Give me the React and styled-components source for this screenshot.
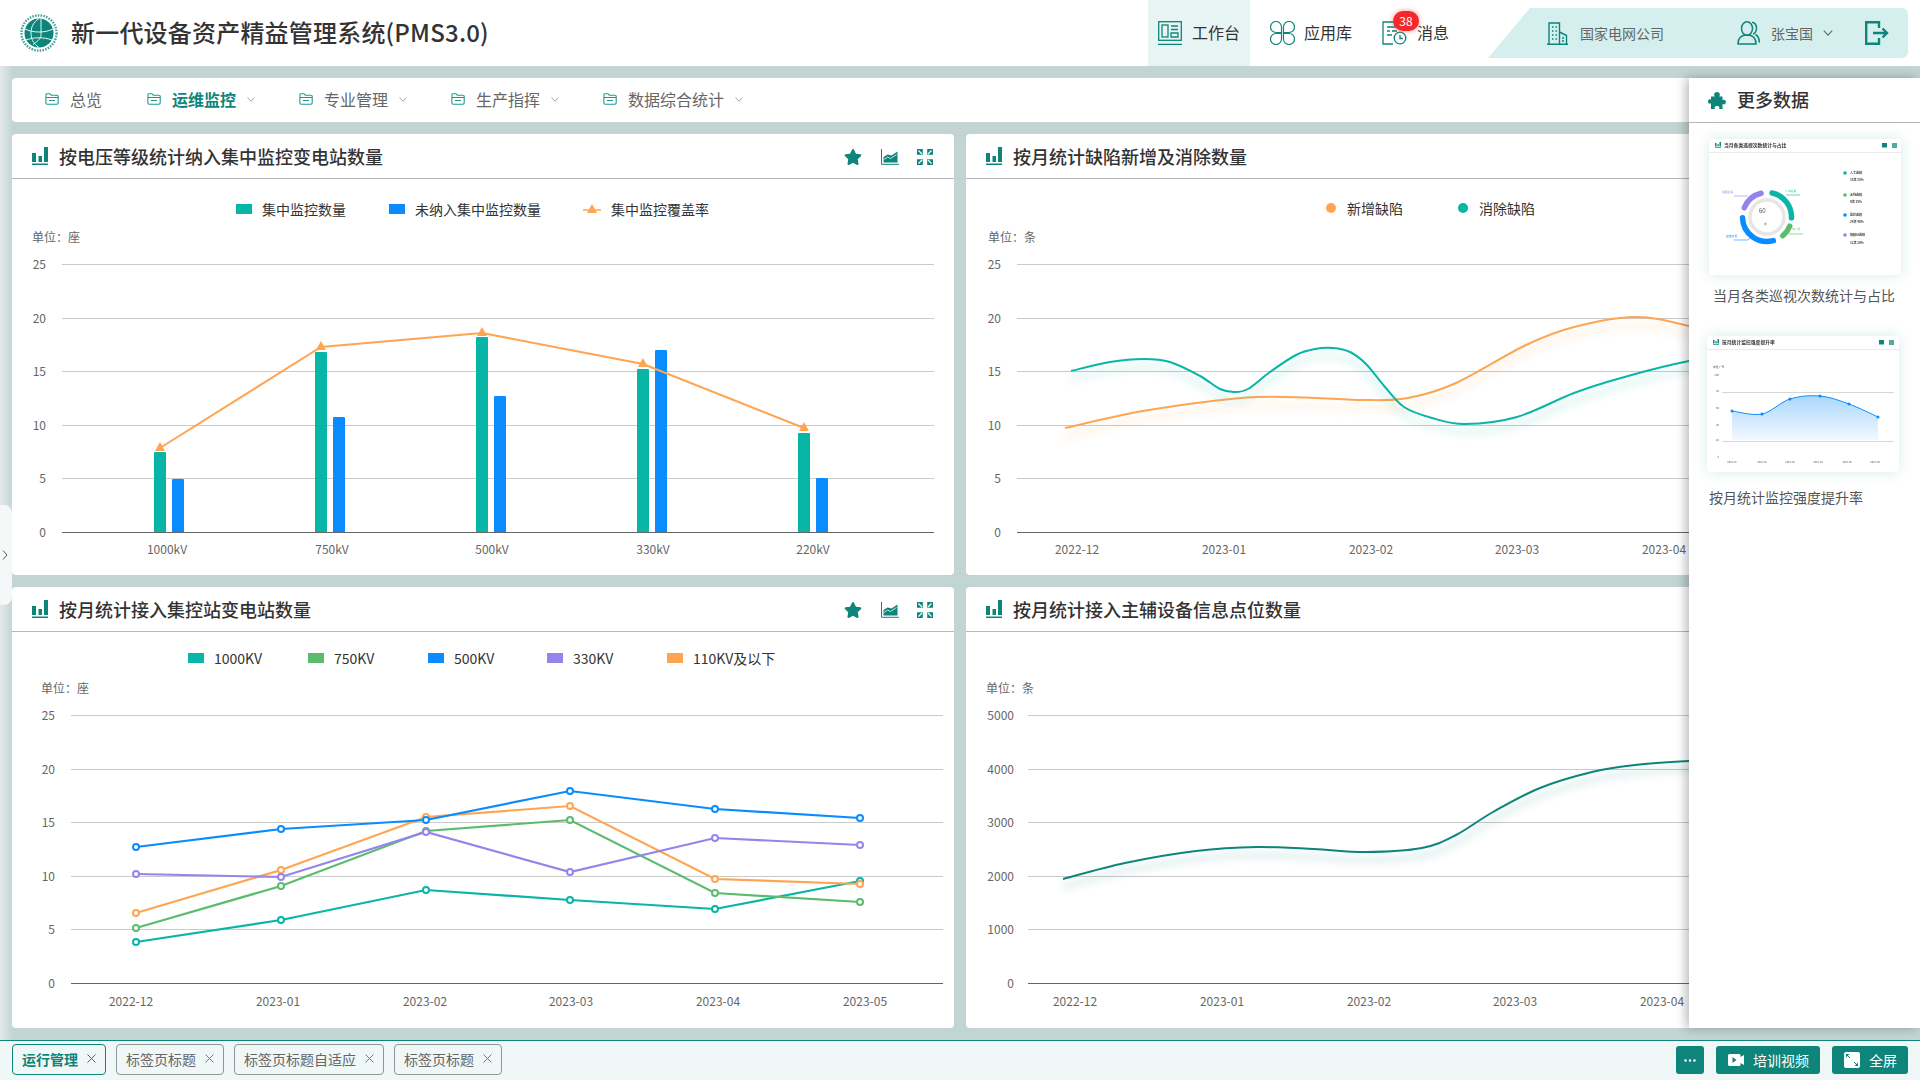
import React from "react";
import styled, { createGlobalStyle } from "styled-components";
import { FaStar } from "react-icons/fa";

const TEAL = "#0e857a";
const C = { teal: "#09b5a6", green: "#5bbb6e", blue: "#0a8cff", purple: "#9484ec", orange: "#ffa552" };

const Global = createGlobalStyle`
  html, body { margin: 0; padding: 0; }
  body { font-family: "Noto Sans CJK SC", "Noto Sans", sans-serif; color: #333; overflow: hidden; }
  * { box-sizing: border-box; }
`;

const Page = styled.div`
  width: 1920px;
  height: 1080px;
  display: flex;
  flex-direction: column;
  overflow: hidden;
`;

/* top bar */
const TopBar = styled.header`
  height: 66px;
  flex: none;
  background: #fff;
  display: flex;
  align-items: center;
  padding-left: 20px;
  padding-right: 12px;
`;
const Brand = styled.h1`
  margin: -3px 0 0 13px;
  font-size: 24px;
  font-weight: 500;
  line-height: 32px;
  letter-spacing: 0.2px;
  color: #333;
  flex: 1;
`;
const NavItem = styled.div`
  position: relative;
  height: 66px;
  display: flex;
  align-items: center;
  gap: ${(p) => p.$gap || 10}px;
  padding: 0 10px;
  font-size: 16px;
  color: #333;
  background: ${(p) => (p.$active ? "#e6f5f4" : "transparent")};
`;
const NavLabel = styled.span`
  margin-top: -2px;
`;
const Nav = styled.nav`
  display: flex;
  gap: 10px;
  margin-right: 29px;
`;
const Badge = styled.span`
  position: absolute;
  left: 21px;
  top: 11px;
  width: 26px;
  height: 20px;
  border-radius: 10px;
  background: #f5282d;
  box-shadow: 0 0 5px rgba(245, 40, 45, 0.55);
  color: #fff;
  font-size: 12px;
  line-height: 20px;
  text-align: center;
`;
const OrgBar = styled.div`
  width: 420px;
  height: 50px;
  background: #d4efed;
  border-radius: 0 6px 6px 0;
  clip-path: polygon(42px 0, 100% 0, 100% 100%, 0 100%);
  display: flex;
  align-items: center;
  padding-left: 59px;
  font-size: 14px;
  color: #666;
`;
const OrgText = styled.span`
  margin-left: ${(p) => p.$ml}px;
`;
const Spaced = styled.span`
  display: inline-flex;
  margin-left: ${(p) => p.$ml}px;
`;

/* main */
const Main = styled.main`
  position: relative;
  flex: 1;
  min-height: 0;
  padding: 12px;
  display: flex;
  flex-direction: column;
  gap: 12px;
  background: linear-gradient(to right, #e3e9e7 0, #c2d5d3 13px);
`;
const MenuBar = styled.div`
  height: 44px;
  flex: none;
  background: #fff;
  border-radius: 4px;
  display: flex;
  align-items: center;
  padding: 0 0 2px 33px;
  gap: 44px;
`;
const MenuItem = styled.div`
  display: flex;
  align-items: center;
  font-size: 16px;
  font-weight: ${(p) => (p.$active ? 700 : 400)};
  color: ${(p) => (p.$active ? TEAL : "#666")};
  gap: 11px;
  &:first-child {
    margin-right: 1px;
  }
`;
const Cards = styled.div`
  flex: 1;
  min-height: 0;
  display: grid;
  grid-template-columns: 1fr 1fr;
  grid-template-rows: 1fr 1fr;
  gap: 12px;
`;
const Card = styled.section`
  background: #fff;
  border-radius: 4px;
  display: flex;
  flex-direction: column;
  overflow: hidden;
`;
const CardHead = styled.div`
  height: 45px;
  flex: none;
  display: flex;
  align-items: center;
  padding: 0 21px 0 20px;
  border-bottom: 1px solid #b4b8b8;
`;
const CardTitle = styled.h2`
  flex: 1;
  margin: 0 0 0 11px;
  font-size: 18px;
  font-weight: 500;
  line-height: 24px;
  color: #333;
`;
const Tools = styled.div`
  display: flex;
  align-items: center;
  gap: 18px;
  margin-top: 2px;
  color: ${TEAL};
  svg:first-child {
    margin-right: 1px;
  }
`;
const Legend = styled.div`
  height: 46px;
  flex: none;
  display: flex;
  align-items: center;
  padding: ${(p) => p.$top}px 0 0 ${(p) => p.$left}px;
  font-size: 14px;
  color: #333;
`;
const LegendItem = styled.div`
  width: ${(p) => p.$w}px;
  display: flex;
  align-items: center;
  gap: 10px;
`;
const Swatch = styled.i`
  width: 16px;
  height: 10px;
  background: ${(p) => p.$color};
`;
const Dot = styled.i`
  width: 10px;
  height: 10px;
  margin-right: 1px;
  border-radius: 50%;
  background: ${(p) => p.$color};
`;
const Plot = styled.svg`
  display: block;
  flex: 1;
  min-height: 0;
`;
const AxisText = styled.text`
  font-size: 12px;
  fill: #666;
`;
const Curve = styled.path`
  fill: none;
  stroke: ${(p) => p.$color};
  stroke-width: 2;
  filter: drop-shadow(0 8px 4px ${(p) => p.$glow});
`;
const Handle = styled.div`
  position: absolute;
  left: 0;
  top: 439px;
  width: 12px;
  height: 100px;
  padding-left: 2px;
  background: #f4f8f8;
  border-radius: 0 8px 8px 0;
  display: flex;
  align-items: center;
`;

/* more data panel */
const Panel = styled.aside`
  position: absolute;
  right: 0;
  top: 12px;
  bottom: 12px;
  width: 231px;
  background: #fff;
  box-shadow: -3px 0 10px rgba(0, 0, 0, 0.28);
`;
const PanelHead = styled.div`
  height: 45px;
  display: flex;
  align-items: center;
  gap: 11px;
  padding-left: 19px;
  border-bottom: 1px solid #b4b8b8;
`;
const PanelTitle = styled.h3`
  margin: -2px 0 0;
  font-size: 18px;
  font-weight: 500;
  color: #333;
`;
const PanelBody = styled.div`
  padding-top: 16px;
`;
const Thumb = styled.div`
  width: 192px;
  height: 136px;
  margin-left: ${(p) => p.$ml}px;
  margin-top: ${(p) => p.$mt}px;
  background: #fff;
  border-radius: 4px;
  box-shadow: 0 0 14px rgba(14, 133, 122, 0.16);
`;
const ThumbPlot = styled.svg`
  display: block;
  filter: blur(0.35px);
`;
const TinyText = styled.text`
  font-size: ${(p) => p.$s || 3.4}px;
  font-weight: ${(p) => p.$w || 400};
  fill: ${(p) => p.$c || "#333"};
`;
const Caption = styled.p`
  margin: ${(p) => p.$mt}px 0 0 ${(p) => p.$ml}px;
  font-size: 14px;
  line-height: 20px;
  color: #555;
`;

/* bottom bar */
const BottomBar = styled.footer`
  height: 40px;
  flex: none;
  border-top: 1px solid ${TEAL};
  background: #f0f7f7;
  display: flex;
  align-items: center;
  padding: 0 12px;
  position: relative;
`;
const Tabs = styled.div`
  flex: 1;
  display: flex;
  gap: 10px;
  margin-top: -2px;
`;
const Tab = styled.div`
  height: 31px;
  display: flex;
  align-items: center;
  gap: 9px;
  padding: 0 9px 2px;
  border: 1px solid ${(p) => (p.$active ? TEAL : "#8e9696")};
  border-radius: 4px;
  font-size: 14px;
  font-weight: ${(p) => (p.$active ? 700 : 400)};
  color: ${(p) => (p.$active ? TEAL : "#666")};
`;
const Actions = styled.div`
  display: flex;
  gap: 12px;
  margin-top: -1px;
`;
const ActionButton = styled.div`
  height: 28px;
  display: flex;
  align-items: center;
  justify-content: center;
  gap: 9px;
  padding: 0 11px 1px 12px;
  border-radius: 3px;
  background: ${TEAL};
  color: #fff;
  font-size: 14px;
`;
const MoreButton = styled(ActionButton)`
  width: 28px;
  padding: 0;
`;

/* icons */
const Logo = () => (
  <svg width="38" height="38" viewBox="0 0 38 38" fill="none">
    <circle cx="19" cy="19" r="17.6" stroke={TEAL} strokeWidth="2.4" strokeDasharray="1.6 1.2" opacity=".75" />
    <circle cx="19" cy="19" r="14.5" fill={TEAL} />
    <path d="M19 4.5c-6 4-8 9-8 14.500s2 10.500 8 14.500M5 15c8 4 20 4 28 0M6 26c8-3 18-3 26 0M21 4.500v17c0 2-2 5-8 9" stroke="#fff" strokeWidth=".9" />
  </svg>
);
const BarIcon = () => (
  <svg width="16" height="18" viewBox="0 0 16 18" fill={TEAL}>
    <rect x="0" y="6" width="4" height="9" />
    <rect x="6.500" y="9" width="3.500" height="6" />
    <rect x="12" y="0" width="4" height="15" />
    <rect x="0" y="16.500" width="16" height="1.500" />
  </svg>
);
const AreaIcon = () => (
  <svg width="18" height="16" viewBox="0 0 18 16" fill="none">
    <path d="M.5 0v15.300H18" stroke={TEAL} />
    <path d="M2.500 13.500V8l4-2.500 4 1 6-4v11z" fill={TEAL} />
    <path d="M3 10.500l3.500-2.500 3 1.500 6-4" stroke="#fff" strokeWidth=".8" />
  </svg>
);
const ExpandIcon = () => (
  <svg width="16" height="16" viewBox="0 0 16 16">
    <rect x="0" y="0" width="16" height="16" fill={TEAL} />
    <path d="M5.800 0h4.400v5.800H16v4.400h-5.800V16H5.800v-5.800H0V5.800h5.800z" fill="#fff" />
    <path d="M1.500 1.500l3.500 3.500M14.500 1.500L11 5M1.500 14.500L5 11M14.500 14.500L11 11" stroke="#fff" strokeWidth="1.200" />
  </svg>
);
const PuzzleIcon = () => (
  <svg width="18" height="17" viewBox="0 0 18 17" fill={TEAL}>
    <path d="M9 0C7.300 0 6.100 1.100 6.100 2.500c0 .9.400 1.600.7 2.100H3v3.200c-.5-.3-1-.5-1.400-.5C.7 7.300 0 8.300 0 9.500s.7 2.200 1.600 2.200c.4 0 .9-.2 1.400-.5V17h4c-.2-.5-.4-1-.4-1.500 0-1 1-1.600 2.400-1.600s2.400.6 2.400 1.600c0 .5-.2 1-.4 1.500h3.500v-5c.5.3 1 .4 1.400.4 1.100 0 2-.9 2-2.300s-.9-2.300-2-2.300c-.4 0-.9.1-1.400.4V4.600h-3.300c.3-.5.7-1.200.7-2.100C11.900 1.100 10.700 0 9 0z" />
  </svg>
);
const Folder = () => (
  <svg width="14" height="12" viewBox="0 0 14 12" fill="none" stroke="#1f9a90" strokeWidth="1.100">
    <path d="M1 3V1.800C1 1.100 1.400.700 2 .700h3l1.200 1.500H12c.700 0 1.200.400 1.200 1.100v6.500c0 1-.600 1.500-1.500 1.500H2.300c-.900 0-1.500-.500-1.500-1.500z" />
    <path d="M1 4.500h12.200M4 7.500h6" />
  </svg>
);
const Chevron = ({ w = 8, h = 5, color = "#999" }) => (
  <svg width={w} height={h} viewBox="0 0 8 5" fill="none" stroke={color} strokeWidth=".9">
    <path d="M.5.500L4 4.300 7.500.500" />
  </svg>
);
const WorkIcon = () => (
  <svg width="24" height="24" viewBox="0 0 24 24" fill="none" stroke={TEAL} strokeWidth="1.300">
    <rect x=".7" y=".7" width="22.600" height="18.600" />
    <rect x="4" y="4" width="6" height="12" />
    <path d="M13 5h7M13 8.500h7M13 12h7v4h-7zM0 23.300h24" />
  </svg>
);
const Petal = ({ t }) => (
  <path transform={t} d="M11.500 11.500H6A5.500 5.500 0 1 1 11.500 6z" />
);
const CloverIcon = () => (
  <svg width="25" height="24" viewBox="0 0 25 24" fill="none" stroke={TEAL} strokeWidth="1.200">
    <Petal t="" />
    <Petal t="matrix(-1 0 0 1 25 0)" />
    <Petal t="matrix(1 0 0 -1 0 24)" />
    <Petal t="matrix(-1 0 0 -1 25 24)" />
  </svg>
);
const MsgIcon = () => (
  <svg width="25" height="24" viewBox="0 0 25 24" fill="none" stroke={TEAL} strokeWidth="1.300">
    <path d="M19 9V1H1v22h10" />
    <path d="M5 6h10M5 10h3M10 10h5M5 14h5" />
    <circle cx="18" cy="17" r="5.800" fill="#fff" />
    <path d="M18 14v3.500h3" />
  </svg>
);
const BuildingIcon = () => (
  <svg width="21" height="23" viewBox="0 0 21 23" fill="none" stroke={TEAL} strokeWidth="1.400">
    <path d="M2 22.300V1h10.500v21.300M12.500 10l7 3.500v8.800M0 22.300h21" />
    <path d="M5 5h1.500M8.500 5H10M5 9h1.500M8.500 9H10M5 13h1.500M8.500 13H10M5 17h1.500M8.500 17H10M15 16h2M15 19h2" />
  </svg>
);
const UserIcon = () => (
  <svg width="23" height="24" viewBox="0 0 23 24" fill="none" stroke={TEAL} strokeWidth="1.500">
    <ellipse cx="10" cy="7.500" rx="5.500" ry="6.700" />
    <path d="M1 23c0-6 3-9 9-9s9 3 9 9z" />
    <path d="M15 1.200c3 .5 4.500 3 4.500 6s-1.500 5-3.500 6M18.500 13.500c2.500 1.500 3.800 4 3.800 8" />
  </svg>
);
const LogoutIcon = () => (
  <svg width="24" height="24" viewBox="0 0 24 24" fill="none" stroke={TEAL} strokeWidth="2.400">
    <path d="M14 7V1.200H1.200v21.600H14V17" />
    <path d="M8 12h14M17.500 7.500L22 12l-4.500 4.500" />
  </svg>
);
const CloseIcon = ({ color }) => (
  <svg width="9" height="9" viewBox="0 0 9 9" fill="none" stroke={color} strokeWidth="1">
    <path d="M.5.500l8 8M8.500.500l-8 8" />
  </svg>
);
const DotsIcon = () => (
  <svg width="12" height="3" viewBox="0 0 12 3" fill="#fff">
    <circle cx="1.500" cy="1.500" r="1.200" />
    <circle cx="6" cy="1.500" r="1.200" />
    <circle cx="10.500" cy="1.500" r="1.200" />
  </svg>
);
const VideoIcon = () => (
  <svg width="16" height="12" viewBox="0 0 16 12">
    <path d="M2 0h9c1 0 1.500.500 1.500 1.500v1.500L16 1v10l-3.500-2v1.500c0 1-.500 1.500-1.500 1.500H2c-1 0-2-.500-2-1.500v-9C0 .500 1 0 2 0z" fill="#fff" />
    <path d="M4.500 3l4 3-4 3z" fill={TEAL} />
  </svg>
);
const ScreenIcon = () => (
  <svg width="16" height="16" viewBox="0 0 16 16">
    <rect width="16" height="16" rx="2" fill="#fff" />
    <path d="M2 2h3.500L2 5.500zM14 14h-3.500L14 10.500z" fill={TEAL} />
    <path d="M3 3l3 3M13 13l-3-3" stroke={TEAL} />
  </svg>
);

/* chart helpers: plots use page coordinates through their viewBox */
const smooth = (pts) => {
  let d = `M${pts[0][0]} ${pts[0][1]}`;
  for (let i = 0; i < pts.length - 1; i++) {
    const p0 = pts[i - 1] || pts[i];
    const p1 = pts[i];
    const p2 = pts[i + 1];
    const p3 = pts[i + 2] || p2;
    const c1 = [p1[0] + (p2[0] - p0[0]) / 6, p1[1] + (p2[1] - p0[1]) / 6];
    const c2 = [p2[0] - (p3[0] - p1[0]) / 6, p2[1] - (p3[1] - p1[1]) / 6];
    d += `C${c1[0]} ${c1[1]} ${c2[0]} ${c2[1]} ${p2[0]} ${p2[1]}`;
  }
  return d;
};

const Axes = ({ x1, x2, ys, yLabels, yRight, xLabels, xY, unit, unitX, unitY }) => (
  <>
    <AxisText x={unitX} y={unitY + 5}>{unit}</AxisText>
    {ys.map((y, i) => (
      <g key={y}>
        <line x1={x1} x2={x2} y1={y + 0.5} y2={y + 0.5} stroke={i === ys.length - 1 ? "#666" : "#cacaca"} />
        <AxisText x={yRight} y={y + 5} textAnchor="end">{yLabels[i]}</AxisText>
      </g>
    ))}
    {xLabels.map(([t, x]) => (
      <AxisText key={t} x={x} y={xY + 5} textAnchor="middle">{t}</AxisText>
    ))}
  </>
);

const TOP_YS = [264, 318, 371, 425, 478, 532];
const BOT_YS = [715, 769, 822, 876, 929, 983];
const COUNT_LABELS = [25, 20, 15, 10, 5, 0];

const bars = [
  [154, 452, C.teal], [172, 479, C.blue],
  [315, 352, C.teal], [333, 417, C.blue],
  [476, 337, C.teal], [494, 396, C.blue],
  [637, 369, C.teal], [655, 350, C.blue],
  [798, 433, C.teal], [816, 478, C.blue],
];
const rate = [[160, 448], [321, 347], [482, 333], [643, 364], [804, 428]];

const Chart1 = () => (
  <Plot viewBox="12 225 942 350">
    <Axes x1={62} x2={934} ys={TOP_YS} yLabels={COUNT_LABELS} yRight={46} unit="单位：座" unitX={32} unitY={237} xY={549}
      xLabels={[["1000kV", 167], ["750kV", 332], ["500kV", 492], ["330kV", 653], ["220kV", 813]]} />
    {bars.map(([x, y, c]) => (
      <path key={x} d={`M${x} 532V${y + 1}q0-1 1-1h10q1 0 1 1V532z`} fill={c} />
    ))}
    <polyline points={rate.map((p) => p.join(",")).join(" ")} fill="none" stroke={C.orange} strokeWidth="2" />
    {rate.map(([x, y]) => (
      <polygon key={x} points={`${x},${y - 6} ${x + 5},${y + 3} ${x - 5},${y + 3}`} fill={C.orange} />
    ))}
  </Plot>
);

const defectNew = [[1065, 428], [1149, 410], [1257, 397], [1361, 400], [1408, 398], [1456, 383], [1526, 345], [1574, 327], [1635, 317], [1689, 326], [1750, 345], [1811, 350]];
const defectFixed = [[1071, 371], [1110, 362], [1144, 359], [1170, 362], [1200, 376], [1220, 389], [1234, 392], [1248, 389], [1270, 372], [1296, 355], [1315, 349], [1333, 348], [1350, 352], [1366, 364], [1385, 387], [1404, 407], [1432, 418], [1465, 424], [1517, 417], [1574, 393], [1621, 378], [1689, 361], [1811, 340]];

const Chart2 = () => (
  <Plot viewBox="966 225 942 350">
    <Axes x1={1017} x2={1888} ys={TOP_YS} yLabels={COUNT_LABELS} yRight={1001} unit="单位：条" unitX={988} unitY={237} xY={549}
      xLabels={[["2022-12", 1077], ["2023-01", 1224], ["2023-02", 1371], ["2023-03", 1517], ["2023-04", 1664], ["2023-05", 1811]]} />
    <Curve d={smooth(defectNew)} $color={C.orange} $glow="rgba(255,165,82,.38)" />
    <Curve d={smooth(defectFixed)} $color={C.teal} $glow="rgba(9,181,166,.38)" />
  </Plot>
);

const monthX = [136, 281, 426, 570, 715, 860];
const series = [
  [C.teal, [942, 920, 890, 900, 909, 881]],
  [C.green, [928, 886, 831, 820, 893, 902]],
  [C.orange, [913, 870, 817, 806, 879, 884]],
  [C.blue, [847, 829, 820, 791, 809, 818]],
  [C.purple, [874, 877, 832, 872, 838, 845]],
];

const Chart3 = () => (
  <Plot viewBox="12 678 942 350">
    <Axes x1={71} x2={943} ys={BOT_YS} yLabels={COUNT_LABELS} yRight={55} unit="单位：座" unitX={41} unitY={688} xY={1001}
      xLabels={[["2022-12", 131], ["2023-01", 278], ["2023-02", 425], ["2023-03", 571], ["2023-04", 718], ["2023-05", 865]]} />
    {series.map(([c, ys]) => (
      <g key={c}>
        <polyline points={ys.map((y, i) => `${monthX[i]},${y}`).join(" ")} fill="none" stroke={c} strokeWidth="2.200" />
        {ys.map((y, i) => (
          <circle key={i} cx={monthX[i]} cy={y} r="3" fill="#fff" stroke={c} strokeWidth="2" />
        ))}
      </g>
    ))}
  </Plot>
);

const points = [[1063, 879], [1125, 863], [1196, 851], [1257, 847], [1314, 849], [1366, 852], [1422, 848], [1456, 835], [1493, 812], [1540, 788], [1592, 772], [1635, 765], [1689, 761], [1811, 755]];

const Chart4 = () => (
  <Plot viewBox="966 678 942 350">
    <Axes x1={1028} x2={1888} ys={BOT_YS} yLabels={[5000, 4000, 3000, 2000, 1000, 0]} yRight={1014} unit="单位：条" unitX={986} unitY={688} xY={1001}
      xLabels={[["2022-12", 1075], ["2023-01", 1222], ["2023-02", 1369], ["2023-03", 1515], ["2023-04", 1662], ["2023-05", 1809]]} />
    <Curve d={smooth(points)} $color={TEAL} $glow="rgba(14,133,122,.38)" />
  </Plot>
);

const arc = (cx, cy, r, from, to) => {
  const pt = (a) => [cx + r * Math.sin((a * Math.PI) / 180), cy - r * Math.cos((a * Math.PI) / 180)];
  const [x1, y1] = pt(from);
  const [x2, y2] = pt(to);
  return `M${x1} ${y1}A${r} ${r} 0 ${to - from > 180 ? 1 : 0} 1 ${x2} ${y2}`;
};

const MiniHead = ({ title, end }) => (
  <>
    <rect x="0" y="13" width="192" height=".6" fill="#dcdcdc" />
    <rect x="6" y="4" width="1.500" height="3.500" fill={TEAL} />
    <rect x="8.500" y="5" width="1.200" height="2.500" fill={TEAL} />
    <rect x="10.500" y="3" width="1.500" height="4.500" fill={TEAL} />
    <rect x="6" y="8" width="6" height=".7" fill={TEAL} />
    <TinyText x="15" y="8" $s={4.800} $w={700}>{title}</TinyText>
    <rect x={end} y="4" width="5" height="4.500" fill={TEAL} />
    <rect x={end + 10} y="4" width="5" height="5" fill={TEAL} opacity=".7" />
  </>
);

const ThumbDonut = () => (
  <ThumbPlot width="192" height="136" viewBox="0 0 192 136">
    <MiniHead title="当月各类巡视次数统计与占比" end={173} />
    <circle cx="58" cy="78" r="17" fill="none" stroke="#e6e6e6" strokeWidth="3.500" />
    <g fill="none" strokeWidth="5.500" strokeLinecap="round">
      <path d={arc(58, 78, 24.5, 12, 92)} stroke={C.teal} />
      <path d={arc(58, 78, 24.5, 112, 140)} stroke={C.green} />
      <path d={arc(58, 78, 24.5, 165, 268)} stroke={C.blue} />
      <path d={arc(58, 78, 24.5, 292, 346)} stroke={C.purple} />
    </g>
    <TinyText x="50" y="74" $s={6} $c="#555">60</TinyText>
    <TinyText x="55" y="86" $s={2.500}>次</TinyText>
    <g fill="none" strokeWidth=".6">
      <path d="M77 56h14" stroke={C.teal} />
      <path d="M80 95h14" stroke={C.green} />
      <path d="M25 101h14l3-3" stroke={C.blue} />
      <path d="M25 57h14" stroke={C.purple} />
    </g>
    <TinyText x="76" y="53" $s={2.800} $c={C.teal}>人工巡视</TinyText>
    <TinyText x="83" y="91" $s={2.800} $c={C.green}>无人机</TinyText>
    <TinyText x="17" y="98" $s={2.800} $c={C.blue}>监控巡视</TinyText>
    <TinyText x="13" y="54" $s={2.800} $c={C.purple}>视频巡视</TinyText>
    {[[34, 41, C.teal, "人工巡视", "15次  25%"], [56, 63, C.green, "无线巡视", "9次  15%"], [76, 83, C.blue, "监控巡视", "24次  40%"], [96, 104, C.purple, "视频AI巡视", "12次  20%"]].map(([y, y2, c, t, v]) => (
      <g key={t}>
        <circle cx="136" cy={y} r="1.800" fill={c} />
        <TinyText x="141" y={y + 1.200} $s={3} $w={700}>{t}</TinyText>
        <TinyText x="141" y={y2 + 1.200} $s={3} $w={700}>{v}</TinyText>
      </g>
    ))}
  </ThumbPlot>
);

const risePts = [[25, 75], [55, 78], [83, 63], [113, 60], [142, 68], [171, 81]];

const ThumbArea = () => (
  <ThumbPlot width="192" height="136" viewBox="0 0 192 136">
    <defs>
      <linearGradient id="riseFill" x1="0" y1="0" x2="0" y2="1">
        <stop offset="0" stopColor="#a9d7fd" />
        <stop offset="1" stopColor="#f3f9ff" />
      </linearGradient>
    </defs>
    <MiniHead title="按月统计监控强度提升率" end={172} />
    <TinyText x="6" y="32" $s={2.800}>单位：%</TinyText>
    {[[100, 40], [80, 56], [60, 73], [40, 90], [20, 105], [0, 122]].map(([t, y]) => (
      <TinyText key={t} x="12" y={y} textAnchor="end" $s={2.800} $c="#555">{t}</TinyText>
    ))}
    <path d="M15 56.500h172M15 105.500h172" stroke="#c4c4c4" strokeWidth=".7" />
    <path d={`${smooth(risePts)}V104H25z`} fill="url(#riseFill)" />
    <path d={smooth(risePts)} fill="none" stroke={C.blue} strokeWidth="1" />
    {risePts.map(([x, y]) => <circle key={x} cx={x} cy={y} r="1.500" fill={C.blue} />)}
    {["2023-01", "2023-02", "2023-03", "2023-04", "2023-05", "2023-06"].map((t, i) => (
      <TinyText key={t} x={[25, 55, 83, 111, 140, 168][i]} y="127" textAnchor="middle" $s={2.600} $c="#555">{t}</TinyText>
    ))}
  </ThumbPlot>
);

const cards = [
  { title: "按电压等级统计纳入集中监控变电站数量", Chart: Chart1, top: 14, left: 224, legend: [
    [<Swatch $color={C.teal} />, "集中监控数量", 153],
    [<Swatch $color={C.blue} />, "未纳入集中监控数量", 194],
    [<svg width="18" height="10" viewBox="0 0 18 10"><path d="M0 6h18" stroke={C.orange} strokeWidth="1.500" /><path d="M9 0l5 9H4z" fill={C.orange} /></svg>, "集中监控覆盖率", 200],
  ] },
  { title: "按月统计缺陷新增及消除数量", Chart: Chart2, top: 12, left: 360, legend: [
    [<Dot $color={C.orange} />, "新增缺陷", 132],
    [<Dot $color={C.teal} />, "消除缺陷", 132],
  ] },
  { title: "按月统计接入集控站变电站数量", Chart: Chart3, top: 6, left: 176, legend: [
    [<Swatch $color={C.teal} />, "1000KV", 120],
    [<Swatch $color={C.green} />, "750KV", 120],
    [<Swatch $color={C.blue} />, "500KV", 119],
    [<Swatch $color={C.purple} />, "330KV", 120],
    [<Swatch $color={C.orange} />, "110KV及以下", 120],
  ] },
  { title: "按月统计接入主辅设备信息点位数量", Chart: Chart4, top: 6, left: 0, legend: [] },
];

const menus = [["总览", false], ["运维监控", true], ["专业管理", true], ["生产指挥", true], ["数据综合统计", true]];
const tabs = ["运行管理", "标签页标题", "标签页标题自适应", "标签页标题"];

export default function App() {
  return (
    <Page>
      <Global />
      <TopBar>
        <Logo />
        <Brand>新一代设备资产精益管理系统(PMS3.0)</Brand>
        <Nav>
          <NavItem $active $gap={10}><WorkIcon /><NavLabel>工作台</NavLabel></NavItem>
          <NavItem $gap={9}><CloverIcon /><NavLabel>应用库</NavLabel></NavItem>
          <NavItem $gap={10}><MsgIcon /><NavLabel>消息</NavLabel><Badge>38</Badge></NavItem>
        </Nav>
        <OrgBar>
          <BuildingIcon />
          <OrgText $ml={12}>国家电网公司</OrgText>
          <Spaced $ml={73}><UserIcon /></Spaced>
          <OrgText $ml={11}>张宝国</OrgText>
          <Spaced $ml={10}><Chevron w={10} h={6} color="#666" /></Spaced>
          <Spaced $ml={32}><LogoutIcon /></Spaced>
        </OrgBar>
      </TopBar>

      <Main>
        <MenuBar>
          {menus.map(([name, more], i) => (
            <MenuItem key={name} $active={i === 1}>
              <Folder />
              {name}
              {more && <Chevron />}
            </MenuItem>
          ))}
        </MenuBar>
        <Cards>
          {cards.map(({ title, Chart, top, left, legend }) => (
            <Card key={title}>
              <CardHead>
                <BarIcon />
                <CardTitle>{title}</CardTitle>
                <Tools>
                  <FaStar size={18} />
                  <AreaIcon />
                  <ExpandIcon />
                </Tools>
              </CardHead>
              <Legend $top={top} $left={left}>
                {legend.map(([mark, text, w]) => (
                  <LegendItem key={text} $w={w}>{mark}{text}</LegendItem>
                ))}
              </Legend>
              <Chart />
            </Card>
          ))}
        </Cards>
        <Handle>
          <svg width="6" height="10" viewBox="0 0 6 10" fill="none" stroke="#555"><path d="M1 .500L5 5 1 9.500" /></svg>
        </Handle>
        <Panel>
          <PanelHead>
            <PuzzleIcon />
            <PanelTitle>更多数据</PanelTitle>
          </PanelHead>
          <PanelBody>
            <Thumb $ml={20} $mt={0}><ThumbDonut /></Thumb>
            <Caption $ml={24} $mt={10}>当月各类巡视次数统计与占比</Caption>
            <Thumb $ml={18} $mt={31}><ThumbArea /></Thumb>
            <Caption $ml={20} $mt={15}>按月统计监控强度提升率</Caption>
          </PanelBody>
        </Panel>
      </Main>

      <BottomBar>
        <Tabs>
          {tabs.map((t, i) => (
            <Tab key={i} $active={i === 0}>
              {t}
              <CloseIcon color={i === 0 ? TEAL : "#777"} />
            </Tab>
          ))}
        </Tabs>
        <Actions>
          <MoreButton><DotsIcon /></MoreButton>
          <ActionButton><VideoIcon />培训视频</ActionButton>
          <ActionButton><ScreenIcon />全屏</ActionButton>
        </Actions>
      </BottomBar>
    </Page>
  );
}
